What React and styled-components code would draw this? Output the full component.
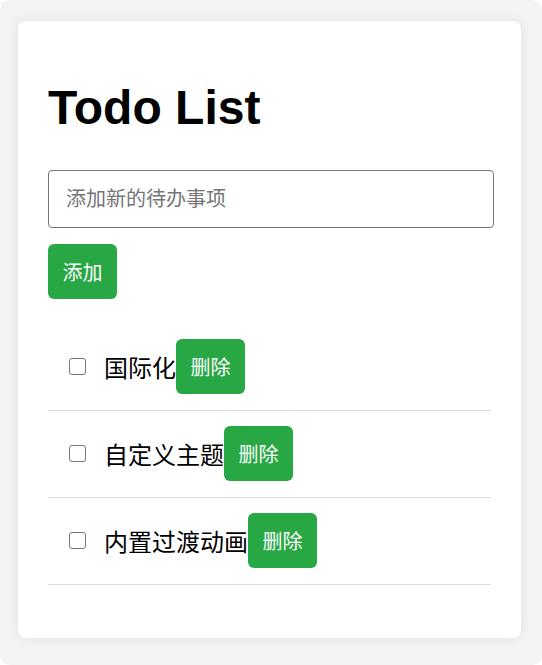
import React, { useState } from 'react';
import styled, { createGlobalStyle } from 'styled-components';

const GlobalStyle = createGlobalStyle`
  html, body {
    margin: 0;
    background: #ffffff;
    font-family: "Liberation Sans", Arial, "Noto Sans CJK SC", sans-serif;
  }
  * { box-sizing: border-box; }
`;

const Page = styled.div`
  min-height: 665px;
  background: #f3f3f3;
  border-radius: 10px;
  padding: 21px 0 27px 18px;
`;

const Card = styled.div`
  width: 503px;
  background: #fff;
  border-radius: 8px;
  box-shadow: 0 0 12px rgba(0, 0, 0, 0.08);
  padding: 30px;
`;

const Title = styled.h1`
  font-size: 48px;
  font-weight: bold;
  margin: 30px 0 36px;
  line-height: 53px;
  color: #000;
`;

const Input = styled.input`
  display: block;
  width: 446px;
  height: 58px;
  padding: 0 17px;
  font-size: 20px;
  font-family: inherit;
  border: 1px solid #767676;
  border-radius: 4px;
  margin-bottom: 16px;
  outline: none;
  &::placeholder { color: #757575; }
`;

const Button = styled.button`
  display: flex;
  align-items: center;
  justify-content: center;
  height: 55px;
  width: 69px;
  padding: 0;
  font-size: 20px;
  font-family: inherit;
  color: #fff;
  background: #28a745;
  border: none;
  border-radius: 6px;
  cursor: pointer;
  flex-shrink: 0;
`;

const List = styled.ul`
  list-style: none;
  margin: 25px 0 23px;
  padding: 0;
`;

const Item = styled.li`
  display: flex;
  align-items: center;
  padding: 15px 0 16px 21px;
  border-bottom: 1px solid #dddddd;
`;

const Check = styled.input`
  appearance: none;
  width: 17px;
  height: 17px;
  margin: 0 18px 0 0;
  border: 1.5px solid #767676;
  border-radius: 3px;
  background: #fff;
  cursor: pointer;
  &:checked {
    background: #0075ff;
    border-color: #0075ff;
  }
`;

const Label = styled.span`
  font-size: 24px;
  color: ${(p) => (p.$done ? '#888' : '#000')};
  text-decoration: ${(p) => (p.$done ? 'line-through' : 'none')};
`;

export default function App() {
  const [text, setText] = useState('');
  const [todos, setTodos] = useState([
    { id: 1, title: '国际化', done: false },
    { id: 2, title: '自定义主题', done: false },
    { id: 3, title: '内置过渡动画', done: false },
  ]);

  const add = () => {
    if (!text.trim()) return;
    setTodos([...todos, { id: Date.now(), title: text.trim(), done: false }]);
    setText('');
  };

  return (
    <>
      <GlobalStyle />
      <Page>
        <Card>
          <Title>Todo List</Title>
          <Input
            placeholder="添加新的待办事项"
            value={text}
            onChange={(e) => setText(e.target.value)}
          />
          <Button onClick={add}>添加</Button>
          <List>
            {todos.map((t) => (
              <Item key={t.id}>
                <Check
                  type="checkbox"
                  checked={t.done}
                  onChange={() =>
                    setTodos(todos.map((x) => (x.id === t.id ? { ...x, done: !x.done } : x)))
                  }
                />
                <Label $done={t.done}>{t.title}</Label>
                <Button onClick={() => setTodos(todos.filter((x) => x.id !== t.id))}>删除</Button>
              </Item>
            ))}
          </List>
        </Card>
      </Page>
    </>
  );
}
